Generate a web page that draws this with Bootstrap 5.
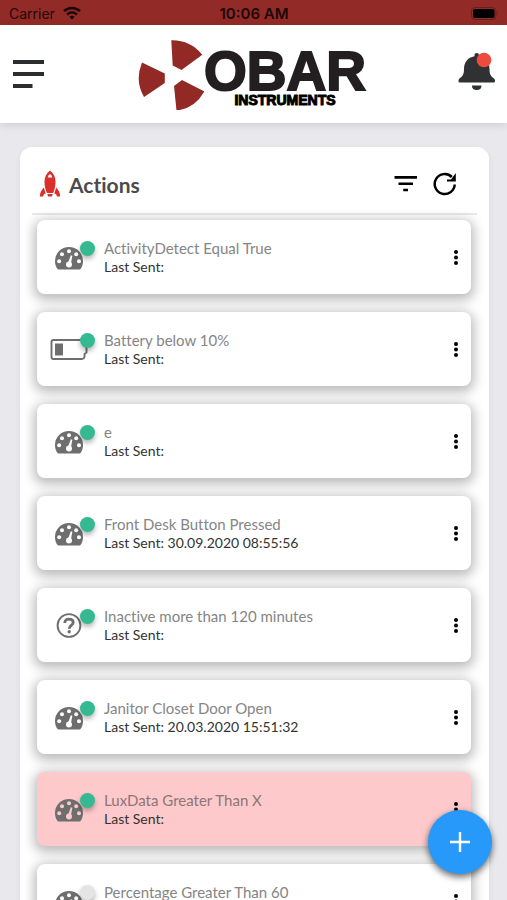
<!DOCTYPE html>
<html lang="en">
<head>
<meta charset="utf-8">
<meta name="viewport" content="width=device-width, initial-scale=1">
<title>Actions</title>
<link href="https://cdn.jsdelivr.net/npm/bootstrap@5.3.0/dist/css/bootstrap.min.css" rel="stylesheet">
<style>
  body { background: #e9e8ed; font-family: Lato, "Open Sans", sans-serif; font-variant-ligatures: none; color: #444; }
  svg { display: block; }
  .status-strip { background: #922a27; color: #1d0808; font: 400 14px/25px Inter, sans-serif; padding: 1px 8px 0 9px; height: 25px; }
  .status-strip .clock { font-weight: 600; font-size: 15px; }
  .status-side { flex: 1 1 0; }
  .top-bar { background: #fff; height: 98px; padding: 0 11px 0 12px; box-shadow: 0 2px 8px rgba(0,0,0,.12); z-index: 2; }
  .plain-btn { background: none; border: 0; padding: 0; color: #000; }
  .brand { color: #231f20; font-family: "Liberation Sans", Arial, sans-serif; font-weight: 700; text-decoration: none; }
  .brand-words { padding-top: 9px; }
  .brand-name { font-size: 55px; line-height: 40px; -webkit-text-stroke: 2px #231f20; }
  .brand-sub { font-size: 14px; line-height: 14px; color: #000; padding-top: 2px; -webkit-text-stroke: 1px #000; }
  .scroll-area { overflow-y: auto; scrollbar-width: none; padding: 24px 18px 24px 20px; }
  .scroll-area::-webkit-scrollbar { display: none; }
  .panel { background: #fff; border-radius: 12px; padding: 0 12px 24px; box-shadow: 0 2px 6px rgba(0,0,0,.06); }
  .panel-head { height: 68px; padding: 7px 20px 0 7px; border-bottom: 2px solid #e9e9e9; }
  .panel-head h1 { font-size: 21px; line-height: 26px; font-weight: 700; color: #4b4b4b; padding-top: 3px; }
  .action-list { gap: 18px; padding: 5px 6px 0 5px; }
  .action-item { background: #fff; border-radius: 8px; height: 74px; padding: 0 6px 0 13px; box-shadow: 0 3px 12px 3px rgba(0,0,0,.27); }
  .action-item.alerting { background: #fec9ca; }
  .kind { width: 38px; height: 38px; margin-right: 16px; }
  .state-dot { position: absolute; top: 3px; right: -7px; width: 15px; height: 15px; border-radius: 50%; background: #35b991; box-shadow: 0 3px 5px rgba(0,0,0,.3); }
  .state-dot.off { background: #e4e4e4; }
  .action-title { font-size: 15px; line-height: 19px; color: #858585; }
  .alerting .action-title { color: #8c7777; }
  .action-sent { font-size: 14px; line-height: 18px; color: #333; }
  .fab { right: 15px; bottom: 26px; width: 64px; height: 64px; border: 0; border-radius: 50%; background: #2699fb; box-shadow: 0 3px 7px rgba(0,0,0,.6); z-index: 3; }
</style>
</head>
<body class="vh-100 overflow-hidden d-flex flex-column">
<svg width="0" height="0" class="position-absolute" aria-hidden="true">
  <symbol id="gauge" viewBox="0 0 38 38">
    <path fill="#6e6e6e" d="M7.500 31C5.800 28.600 5 26 5 23A14 14 0 0 1 33 23C33 26 32.200 28.600 30.500 31Q30 31.600 29 31.600H9Q8 31.600 7.500 31Z"/>
    <g fill="var(--hole,#fff)"><circle cx="9.200" cy="23.200" r="2"/><circle cx="12" cy="16.200" r="2"/><circle cx="19" cy="13.200" r="2"/><circle cx="26.200" cy="16.200" r="2"/><circle cx="29" cy="23.200" r="2"/><circle cx="19" cy="26.600" r="3"/><path d="M18 25L20.800 17.200L22.400 17.700L20.800 26Z"/></g>
  </symbol>
  <symbol id="cell" viewBox="0 0 38 38">
    <path fill="none" stroke="#6e6e6e" stroke-width="1.900" stroke-linejoin="round" d="M3.500 10H33Q35 10 35 12V15L36.500 16V22.500L34.500 24V27Q34 29 32 29H3.500Q1.500 29 1.500 27V12Q1.500 10 3.500 10Z"/>
    <path fill="#6e6e6e" d="M5 13.500H13V25.500H5Z"/>
  </symbol>
  <symbol id="query" viewBox="0 0 38 38">
    <circle cx="19" cy="19.500" r="11.400" fill="none" stroke="#6e6e6e" stroke-width="1.900"/>
    <path fill="none" stroke="#6e6e6e" stroke-width="2.800" d="M14.800 17C14.800 14.400 16.500 13.200 19 13.200C21.600 13.200 23.200 14.500 23.200 16.400C23.200 19.200 19.300 19 19.300 22.700"/>
    <circle cx="19.200" cy="25.700" r="1.700" fill="#6e6e6e"/>
  </symbol>
  <symbol id="dots" viewBox="0 0 18 18"><circle cx="9" cy="4" r="2"/><circle cx="9" cy="9.500" r="2"/><circle cx="9" cy="15" r="2"/></symbol>
</svg>

<div class="status-strip d-flex align-items-center flex-shrink-0">
  <div class="status-side d-flex align-items-center gap-2">
    <span>Carrier</span>
    <svg width="18" height="14" viewBox="0 0 18 14" fill="none" stroke="#1d0808" stroke-width="2.500" aria-label="Wi-Fi"><path d="M1 5.200C5.500 .800 12.500 .800 17 5.200M4 8.600C7 5.800 11 5.800 14 8.600"/><path d="M6.300 10.800Q9 8.600 11.700 10.800L9 13.500Z" fill="#1d0808" stroke="none"/></svg>
  </div>
  <span class="clock">10:06 AM</span>
  <div class="status-side d-flex justify-content-end">
    <svg width="28" height="13" viewBox="0 0 28 13" aria-label="Battery"><rect x=".500" y=".500" width="24.500" height="12" rx="3.500" fill="none" stroke="#64201d"/><rect x="2" y="2" width="21.500" height="9" rx="2" fill="#000"/><path d="M26.200 4.300Q28 6.500 26.200 8.700Z" fill="#64201d"/></svg>
  </div>
</div>

<header class="top-bar d-flex align-items-center justify-content-between flex-shrink-0">
  <button class="plain-btn" type="button" aria-label="Menu"><svg width="33" height="30" viewBox="0 0 33 30" fill="#2b2d2e"><path d="M1 1H32V5H1ZM1 13H32V17H1ZM1 25H20.500V29H1Z"/></svg></button>
  <a href="#" class="brand d-flex align-items-center" aria-label="Obar Instruments">
    <svg width="67" height="72" viewBox="138 38 67 72" fill="#932925"><path d="M172.300 40.300Q191.500 40 203.300 54.800L182.500 70L173.700 65.500ZM143 62.500L165.800 73.500V83L145 97Q135.500 81 143 62.500ZM183 80L205.300 91.500Q196 108.500 177.500 110.500L175 86Z"/></svg>
    <span class="brand-words d-flex flex-column align-items-center"><span class="brand-name">OBAR</span><span class="brand-sub">INSTRUMENTS</span></span>
  </a>
  <button class="plain-btn" type="button" aria-label="Notifications"><svg width="38" height="44" viewBox="0 -1 38 44"><path fill="#2f3132" d="M16.500 3.200V1.800Q16.500 0 18.700 0T21 1.800V3.200C28 4.400 31.500 9.500 31.500 16C31.500 22.500 33.500 23.500 36.500 26Q38 29.500 35.500 29.500H2Q-.500 29.500 1 26C4 23.500 6 22.500 6 16C6 9.500 9.500 4.400 16.500 3.200ZM14 32.500H23.500Q23.500 37 18.700 37T14 32.500Z"/><circle cx="26" cy="7" r="7.300" fill="#ee4b3f"/></svg></button>
</header>

<main class="scroll-area flex-grow-1">
  <section class="panel">
    <div class="panel-head d-flex align-items-center">
      <svg width="22" height="28" viewBox="0 0 22 28" fill="#da2f2b"><path d="M11 .500C14.500 3 16.500 7 16.500 11.500C16.500 16 15.500 20.500 14 23H8C6.500 20.500 5.500 16 5.500 11.500C5.500 7 7.500 3 11 .500Z"/><path d="M8.300 24H13.700L13 26.500H9Z"/><path d="M4.800 17.500L6.700 23.500L5 24L4 26.500H.800Q1.200 21 4.800 17.500ZM17.200 17.500L15.300 23.500L17 24L18 26.500H21.200Q20.800 21 17.200 17.500Z"/><path fill="#fff" d="M11 4Q13 5 13.300 7.500H8.700Q9 5 11 4Z"/></svg>
      <h1 class="mb-0 ms-2 me-auto">Actions</h1>
      <button class="plain-btn me-3" type="button" aria-label="Filter"><svg width="24" height="24" viewBox="0 0 24 24"><path d="M1.500 4H24V6.700H1.500ZM5.500 10.500H20V13H5.500ZM10.200 16.800H15V19.300H10.200Z"/></svg></button>
      <button class="plain-btn" type="button" aria-label="Refresh"><svg width="24" height="24" viewBox="0 0 24 24"><path fill="none" stroke="#000" stroke-width="2.500" d="M21.700 12.500A10 10 0 1 1 18.800 5"/><path d="M22.800 1V9.500H14V7.500H18Z"/></svg></button>
    </div>
    <div class="action-list d-flex flex-column">
      <article class="action-item d-flex align-items-center"><div class="kind position-relative flex-shrink-0"><svg width="38" height="38"><use href="#gauge"/></svg><span class="state-dot"></span></div><div class="flex-grow-1"><div class="action-title">ActivityDetect Equal True</div><div class="action-sent">Last Sent:</div></div><button class="plain-btn" type="button" aria-label="More"><svg width="18" height="18"><use href="#dots"/></svg></button></article>
      <article class="action-item d-flex align-items-center"><div class="kind position-relative flex-shrink-0"><svg width="38" height="38"><use href="#cell"/></svg><span class="state-dot"></span></div><div class="flex-grow-1"><div class="action-title">Battery below 10%</div><div class="action-sent">Last Sent:</div></div><button class="plain-btn" type="button" aria-label="More"><svg width="18" height="18"><use href="#dots"/></svg></button></article>
      <article class="action-item d-flex align-items-center"><div class="kind position-relative flex-shrink-0"><svg width="38" height="38"><use href="#gauge"/></svg><span class="state-dot"></span></div><div class="flex-grow-1"><div class="action-title">e</div><div class="action-sent">Last Sent:</div></div><button class="plain-btn" type="button" aria-label="More"><svg width="18" height="18"><use href="#dots"/></svg></button></article>
      <article class="action-item d-flex align-items-center"><div class="kind position-relative flex-shrink-0"><svg width="38" height="38"><use href="#gauge"/></svg><span class="state-dot"></span></div><div class="flex-grow-1"><div class="action-title">Front Desk Button Pressed</div><div class="action-sent">Last Sent: 30.09.2020 08:55:56</div></div><button class="plain-btn" type="button" aria-label="More"><svg width="18" height="18"><use href="#dots"/></svg></button></article>
      <article class="action-item d-flex align-items-center"><div class="kind position-relative flex-shrink-0"><svg width="38" height="38"><use href="#query"/></svg><span class="state-dot"></span></div><div class="flex-grow-1"><div class="action-title">Inactive more than 120 minutes</div><div class="action-sent">Last Sent:</div></div><button class="plain-btn" type="button" aria-label="More"><svg width="18" height="18"><use href="#dots"/></svg></button></article>
      <article class="action-item d-flex align-items-center"><div class="kind position-relative flex-shrink-0"><svg width="38" height="38"><use href="#gauge"/></svg><span class="state-dot"></span></div><div class="flex-grow-1"><div class="action-title">Janitor Closet Door Open</div><div class="action-sent">Last Sent: 20.03.2020 15:51:32</div></div><button class="plain-btn" type="button" aria-label="More"><svg width="18" height="18"><use href="#dots"/></svg></button></article>
      <article class="action-item alerting d-flex align-items-center" style="--hole:#fec9ca"><div class="kind position-relative flex-shrink-0"><svg width="38" height="38"><use href="#gauge"/></svg><span class="state-dot"></span></div><div class="flex-grow-1"><div class="action-title">LuxData Greater Than X</div><div class="action-sent">Last Sent:</div></div><button class="plain-btn" type="button" aria-label="More"><svg width="18" height="18"><use href="#dots"/></svg></button></article>
      <article class="action-item d-flex align-items-center"><div class="kind position-relative flex-shrink-0"><svg width="38" height="38"><use href="#gauge"/></svg><span class="state-dot off"></span></div><div class="flex-grow-1"><div class="action-title">Percentage Greater Than 60</div><div class="action-sent">Last Sent:</div></div><button class="plain-btn" type="button" aria-label="More"><svg width="18" height="18"><use href="#dots"/></svg></button></article>
    </div>
  </section>
</main>

<button class="fab position-fixed d-flex align-items-center justify-content-center p-0" type="button" aria-label="Add action"><svg width="20" height="20" viewBox="0 0 20 20" fill="#fff"><path d="M8.800 0H11.200V8.800H20V11.200H11.200V20H8.800V11.200H0V8.800H8.800Z"/></svg></button>
<script src="https://cdn.jsdelivr.net/npm/bootstrap@5.3.0/dist/js/bootstrap.bundle.min.js"></script>
</body>
</html>
